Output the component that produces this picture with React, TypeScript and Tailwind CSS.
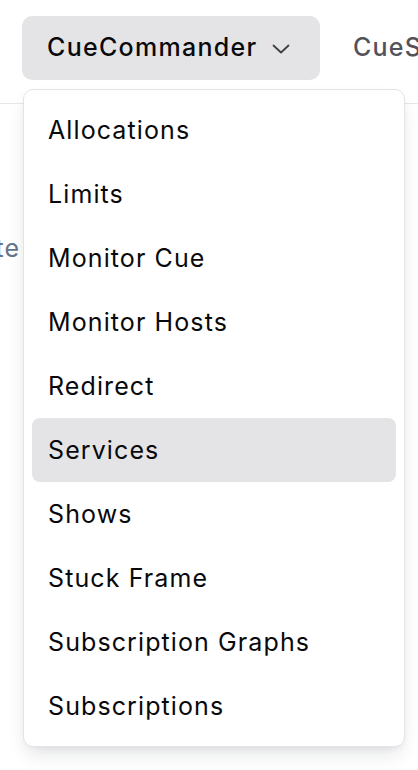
import React from "react";

const items = [
  "Allocations",
  "Limits",
  "Monitor Cue",
  "Monitor Hosts",
  "Redirect",
  "Services",
  "Shows",
  "Stuck Frame",
  "Subscription Graphs",
  "Subscriptions",
];

export default function App() {
  return (
    <div
      className="relative w-[418px] h-[770px] overflow-hidden bg-white text-[#09090b]"
      style={{ fontFamily: "Inter, 'Noto Sans', sans-serif" }}
    >
      <header className="h-[104px] border-b border-[#e5e7eb] flex items-start pt-[16px] pl-[22px] gap-[9px] whitespace-nowrap">
        <button className="h-[64px] w-[298px] shrink-0 rounded-[10px] bg-[#e4e4e7] flex items-center pl-[25px] text-[25px] font-medium tracking-[1.3px]">
          <span>CueCommander</span>
          <svg width="18" height="10" viewBox="0 0 18 10" className="ml-[14px] mt-[2px]" fill="none">
            <path d="M1.5 1.5 L9 8.5 L16.5 1.5" stroke="#3f3f46" strokeWidth="1.8" strokeLinecap="round" strokeLinejoin="round" />
          </svg>
        </button>
        <div className="h-[64px] flex items-center pl-[24px] text-[25px] font-medium tracking-[1.2px] text-[#52525b]">
          CueShows
        </div>
      </header>
      <div className="pt-[129px]">
        <div className="w-[20px] overflow-hidden flex justify-end whitespace-nowrap text-[25px] tracking-[1px] text-[#64748b] leading-[30px]">
          Update
        </div>
      </div>

      <div className="absolute left-[23px] top-[89px] w-[382px] rounded-[10px] border border-[#e4e4e7] bg-white p-[8px] shadow-[0_10px_20px_-4px_rgba(15,23,42,0.12),0_4px_8px_-4px_rgba(15,23,42,0.08)]">
        {items.map((it) => (
          <div
            key={it}
            className={
              "h-[64px] flex items-center pl-[16px] pt-[2px] rounded-[8px] text-[25px] tracking-[1.1px] " +
              (it === "Services" ? "bg-[#e4e4e7]" : "")
            }
          >
            {it}
          </div>
        ))}
      </div>
    </div>
  );
}
